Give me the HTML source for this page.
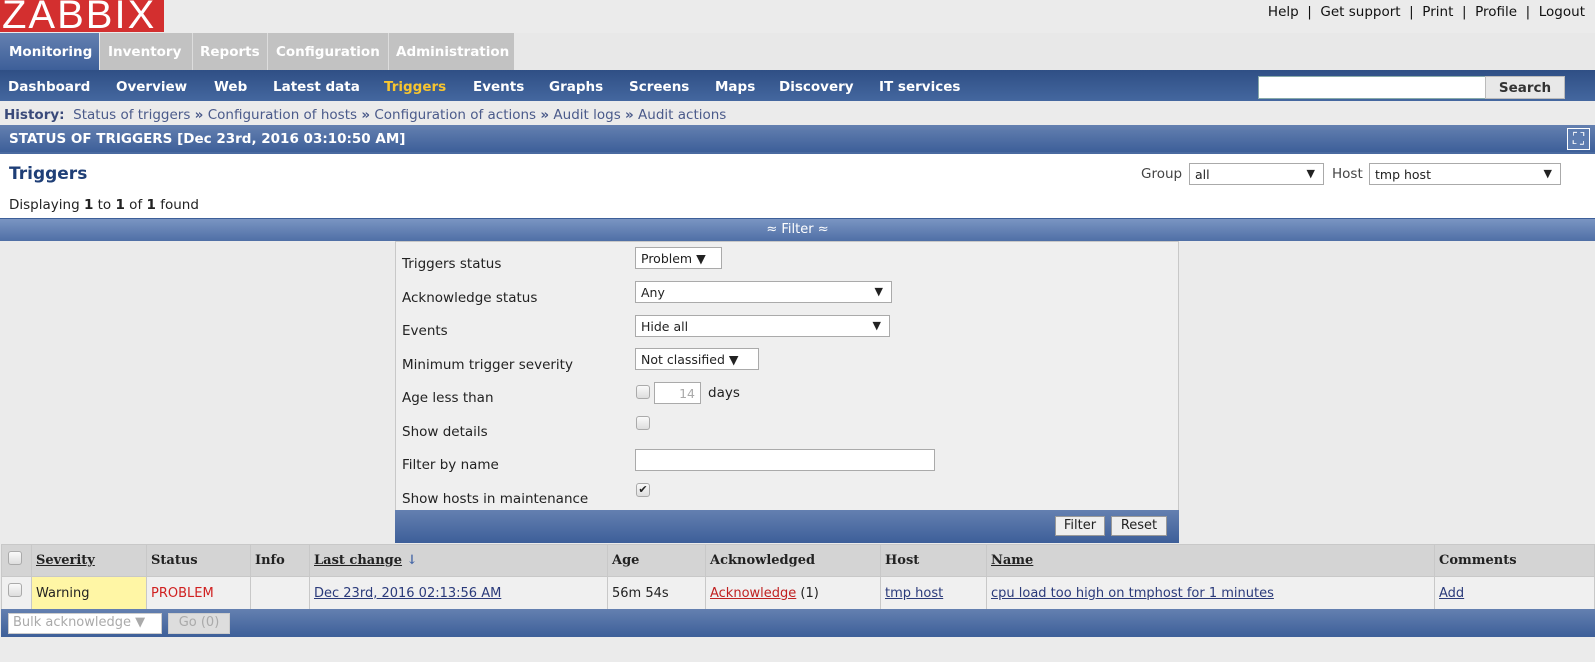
<!DOCTYPE html>
<html><head><meta charset="utf-8"><style>
*{margin:0;padding:0;box-sizing:border-box}
body{width:1595px;height:662px;background:#ebebeb;font-family:"DejaVu Sans","Liberation Sans",sans-serif;font-size:12px;color:#222;position:relative;overflow:hidden}
.a{position:absolute;white-space:nowrap}
.blue{background:linear-gradient(#6480b0,#3d5f99)}
.bb{font-weight:bold}
a{color:#2a3a7a;text-decoration:underline}
.sel{position:absolute;background:#fff;border:1px solid #aaa;height:22px;padding:3px 5px;font-size:12.5px}
.sel i{position:absolute;right:8px;top:3px;font-style:normal;font-size:11px}
.cb{position:absolute;width:14px;height:14px;border:1px solid #aaa;border-radius:3px;background:linear-gradient(#fafafa,#ddd)}
th,td{border:1px solid #c8c8c8;text-align:left;padding:0 4px;font-size:13px}
</style></head><body>
<div class="a" style="left:0;top:0;width:164px;height:32px;background:#d32f2f;color:#fff;font-size:40px;line-height:30px;padding-left:2px;letter-spacing:2px;overflow:hidden;font-family:'Liberation Sans',sans-serif">ZABBIX</div>
<div class="a" style="right:10px;top:4px;font-size:13.5px;color:#111">Help &nbsp;|&nbsp; Get support &nbsp;|&nbsp; Print &nbsp;|&nbsp; Profile &nbsp;|&nbsp; Logout</div>
<div class="a" style="left:0;top:33px;width:1595px;height:37px;background:#e8e8e8"></div>
<div class="a blue bb" style="left:0;top:33px;width:99px;height:37px;color:#fff;font-size:13.5px;padding:11px 0 0 9px">Monitoring</div>
<div class="a bb" style="left:100px;top:33px;width:414px;height:37px;background:#c2c2c2;color:#fff;font-size:13.5px;padding-top:11px"><span style="position:absolute;left:8px">Inventory</span><span style="position:absolute;left:100px">Reports</span><span style="position:absolute;left:176px">Configuration</span><span style="position:absolute;left:296px">Administration</span></div>
<div class="a" style="left:192px;top:33px;width:1px;height:37px;background:#ddd"></div>
<div class="a" style="left:267px;top:33px;width:1px;height:37px;background:#ddd"></div>
<div class="a" style="left:388px;top:33px;width:1px;height:37px;background:#ddd"></div>
<div class="a bb" style="left:0;top:70px;width:1595px;height:31px;background:linear-gradient(#2f4f85,#44679f);color:#fff;font-size:13.5px">
<span class="a" style="left:8px;top:9px">Dashboard</span><span class="a" style="left:116px;top:9px">Overview</span><span class="a" style="left:214px;top:9px">Web</span><span class="a" style="left:273px;top:9px">Latest data</span><span class="a" style="left:384px;top:9px;color:#f7c530">Triggers</span><span class="a" style="left:473px;top:9px">Events</span><span class="a" style="left:549px;top:9px">Graphs</span><span class="a" style="left:629px;top:9px">Screens</span><span class="a" style="left:715px;top:9px">Maps</span><span class="a" style="left:779px;top:9px">Discovery</span><span class="a" style="left:879px;top:9px">IT services</span>
<div class="a" style="left:1258px;top:6px;width:228px;height:23px;background:#fff;border:1px solid #8aa"></div>
<div class="a" style="left:1485px;top:6px;width:80px;height:23px;background:#e8e8e8;border:1px solid #bbb;color:#333;text-align:center;padding-top:3px">Search</div></div>
<div class="a" style="left:4px;top:107px;font-size:13.5px;color:#3a4a7a"><b>History:</b>&nbsp; <span style="color:#4a5a8a">Status of triggers <b>»</b> Configuration of hosts <b>»</b> Configuration of actions <b>»</b> Audit logs <b>»</b> Audit actions</span></div>
<div class="a blue bb" style="left:0;top:125px;width:1595px;height:27px;color:#fff;font-size:13.5px;padding:6px 0 0 9px">STATUS OF TRIGGERS [Dec 23rd, 2016 03:10:50 AM]</div>
<div class="a" style="left:1567px;top:128px;width:23px;height:22px;border:1px solid #fff;background:#5d7cb0;color:#fff;text-align:center;font-size:16px;line-height:20px">⛶</div>
<div class="a" style="left:0;top:152px;width:1595px;height:66px;background:#fff;border-top:2px solid #4a6aa0"></div>
<div class="a bb" style="left:9px;top:164px;font-size:17px;color:#1f3f77">Triggers</div>
<div class="a" style="left:9px;top:197px;font-size:13.5px">Displaying <b>1</b> to <b>1</b> of <b>1</b> found</div>
<div class="a" style="left:1141px;top:166px;font-size:13.5px;color:#444">Group</div>
<div class="sel" style="left:1189px;top:163px;width:135px">all<i>▼</i></div>
<div class="a" style="left:1332px;top:166px;font-size:13.5px;color:#444">Host</div>
<div class="sel" style="left:1369px;top:163px;width:192px">tmp host<i>▼</i></div>
<div class="a" style="left:0;top:218px;width:1595px;height:23px;background:linear-gradient(#7a95c2,#4f6fa6);border-top:1px solid #3d5f99;color:#fff;text-align:center;font-size:13px;padding-top:3px">≈ Filter ≈</div>
<div class="a" style="left:395px;top:241px;width:784px;height:302px;background:#efefef;border:1px solid #c8c8c8"></div>
<div class="a" style="left:402px;top:248px;font-size:13.5px;line-height:33.5px">Triggers status<br>Acknowledge status<br>Events<br>Minimum trigger severity<br>Age less than<br>Show details<br>Filter by name<br>Show hosts in maintenance</div>
<div class="sel" style="left:635px;top:247px;width:87px">Problem ▼</div>
<div class="sel" style="left:635px;top:281px;width:257px">Any<i>▼</i></div>
<div class="sel" style="left:635px;top:315px;width:255px">Hide all<i>▼</i></div>
<div class="sel" style="left:635px;top:348px;width:124px">Not classified ▼</div>
<div class="cb" style="left:636px;top:385px"></div>
<div class="sel" style="left:654px;top:382px;width:47px;text-align:right;color:#aaa">14</div>
<div class="a" style="left:708px;top:385px;font-size:13.5px">days</div>
<div class="cb" style="left:636px;top:416px"></div>
<div class="sel" style="left:635px;top:449px;width:300px"></div>
<div class="cb" style="left:636px;top:483px;font-size:11px;line-height:12px;text-align:center">✔</div>
<div class="a blue" style="left:395px;top:510px;width:784px;height:33px"></div>
<div class="a" style="left:1055px;top:516px;width:50px;height:20px;background:#eee;border:1px solid #999;text-align:center;font-size:13px;padding-top:1px">Filter</div>
<div class="a" style="left:1111px;top:516px;width:56px;height:20px;background:#eee;border:1px solid #999;text-align:center;font-size:13px;padding-top:1px">Reset</div>
<table class="a" style="left:1px;top:544px;width:1594px;border-collapse:collapse">
<tr style="height:32px;background:#d4d4d4;font-weight:bold;font-family:'DejaVu Serif','Liberation Serif',serif"><th style="width:30px;padding:0"><div class="cb" style="position:relative;margin:-6px 0 0 6px"></div></th><th style="width:115px"><u>Severity</u></th><th style="width:104px">Status</th><th style="width:59px">Info</th><th style="width:298px"><u>Last change</u> <span style="color:#4a6aa8">↓</span></th><th style="width:98px">Age</th><th style="width:175px">Acknowledged</th><th style="width:106px">Host</th><th style="width:448px"><u>Name</u></th><th>Comments</th></tr>
<tr style="height:33px;background:#f0f0f0"><td style="padding:0"><div class="cb" style="position:relative;margin:-6px 0 0 6px"></div></td><td style="background:#fff6a5">Warning</td><td style="color:#d02020">PROBLEM</td><td></td><td><a>Dec 23rd, 2016 02:13:56 AM</a></td><td>56m 54s</td><td><a style="color:#c02020">Acknowledge</a> (1)</td><td><a>tmp host</a></td><td><a>cpu load too high on tmphost for 1 minutes</a></td><td><a>Add</a></td></tr>
</table>
<div class="a blue" style="left:1px;top:609px;width:1594px;height:28px"></div>
<div class="a" style="left:8px;top:613px;width:154px;height:21px;background:#fff;border:1px solid #ccc;color:#aaa;font-size:13px;padding:1px 4px">Bulk acknowledge ▼</div>
<div class="a" style="left:168px;top:613px;width:62px;height:21px;background:#ddd;border:1px solid #ccc;color:#aaa;font-size:13px;text-align:center;padding-top:1px">Go (0)</div>
</body></html>
